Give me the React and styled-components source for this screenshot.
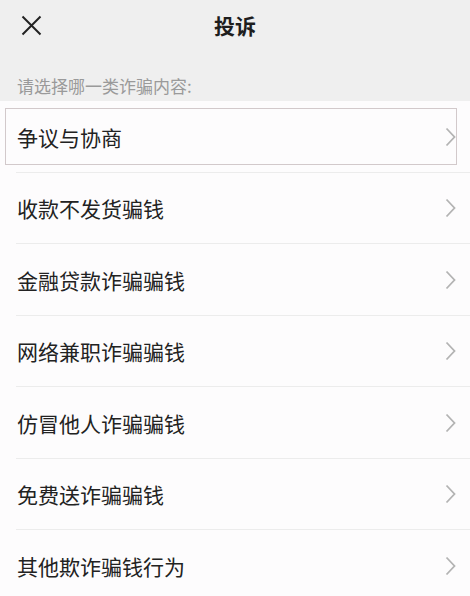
import React from 'react'
import styled, { createGlobalStyle } from 'styled-components'

const items = [
  '争议与协商',
  '收款不发货骗钱',
  '金融贷款诈骗骗钱',
  '网络兼职诈骗骗钱',
  '仿冒他人诈骗骗钱',
  '免费送诈骗骗钱',
  '其他欺诈骗钱行为',
]

const Global = createGlobalStyle`
  html, body {
    margin: 0;
    padding: 0;
    background: #fdfcfd;
    font-family: "Noto Sans CJK SC", "Noto Sans", sans-serif;
  }
`

const Page = styled.div`
  width: 470px;
  height: 596px;
  overflow: hidden;
  background: #fdfcfd;
`

const Header = styled.div`
  background: #efefef;
`

const TopBar = styled.div`
  height: 50px;
  display: grid;
  grid-template-columns: 60px 1fr 60px;
  align-items: center;
`

const Close = styled.div`
  display: flex;
  align-items: center;
  padding-left: 21px;
  height: 100%;
`

const Title = styled.h1`
  margin: 0;
  text-align: center;
  font-size: 21px;
  font-weight: 700;
  color: #1e1e1e;
  line-height: 1;
`

const Hint = styled.div`
  padding: 26px 17px 5px;
  font-size: 17px;
  line-height: 20px;
  color: #9a9a9a;
`

const List = styled.div`
  display: flex;
  flex-direction: column;
`

const Row = styled.div`
  height: 70.5px;
  padding: 7px 13px 6.5px 5px;
  box-sizing: border-box;
  display: flex;
`

const Item = styled.div`
  flex: 1;
  display: flex;
  align-items: center;
  justify-content: space-between;
  padding-left: 11px;
  border: 1px solid ${p => (p.$focused ? '#d2c9cb' : 'transparent')};
  font-size: 21px;
  color: #222;
`

const Divider = styled.div`
  height: 1px;
  margin-left: 16px;
  background: #ececec;
`

const Chevron = () => (
  <svg width="11" height="20" viewBox="0 0 11 20">
    <polyline points="1.5,1.5 9.5,10 1.5,18.5" fill="none" stroke="#b3b3b3" strokeWidth="1.8" />
  </svg>
)

const App = () => {
  return (
    <Page>
      <Global />
      <Header>
        <TopBar>
          <Close>
            <svg width="21" height="21" viewBox="0 0 21 21">
              <path d="M1.5 1.5 L19.5 19.5 M19.5 1.5 L1.5 19.5" stroke="#222" strokeWidth="2" />
            </svg>
          </Close>
          <Title>投诉</Title>
          <div />
        </TopBar>
        <Hint>请选择哪一类诈骗内容:</Hint>
      </Header>
      <List>
        {items.map((text, i) => (
          <React.Fragment key={text}>
            <Row>
              <Item $focused={i === 0}>
                {text}
                <Chevron />
              </Item>
            </Row>
            <Divider />
          </React.Fragment>
        ))}
      </List>
    </Page>
  )
}

export default App
